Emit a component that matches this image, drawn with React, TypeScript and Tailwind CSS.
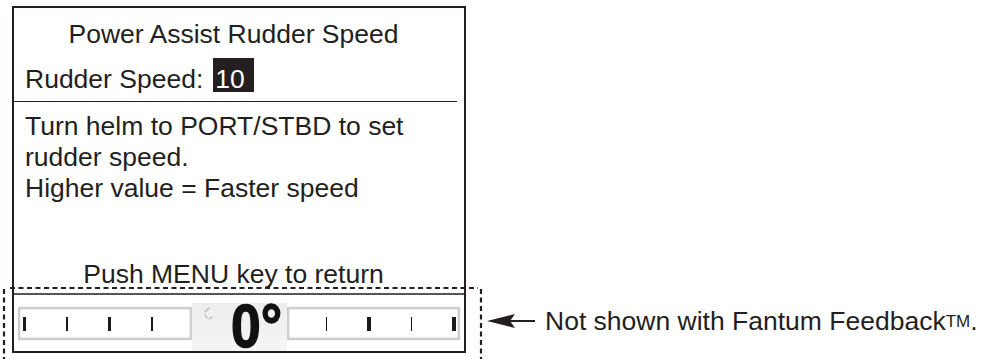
import React from "react";

const INK = "text-[#231f20]";

// one gauge bar with bold/thin tick marks
const Gauge: React.FC<{ side: "left" | "right" }> = ({ side }) => {
  const ticks = side === "left" ? ["b", "t", "b", "t"] : ["t", "b", "t", "b"];
  return (
    <div
      className={`mt-[12px] h-[33px] border-2 border-[#cdcdcd] shadow-[inset_0_0_2px_#bdbdbd,0_0_1px_#d0d0d0] flex items-center gap-[40px] ${
        side === "left" ? "w-[174px] pl-[2.5px] justify-start" : "w-[173px] pr-[2.5px] justify-end"
      }`}
    >
      {ticks.map((t, i) => (
        <div key={i} className={`h-[14px] bg-[#1a1a1a] ${t === "b" ? "w-[3.5px]" : "w-[1.5px]"}`} />
      ))}
    </div>
  );
};

export default function App() {
  return (
    <div
      className={`relative w-[985px] h-[359px] bg-white overflow-hidden flex items-start ${INK}`}
      style={{ fontFamily: '"Liberation Sans", Arial, sans-serif' }}
    >
      {/* display panel */}
      <div className="ml-[12px] mt-[6px] w-[454px] h-[347px] border-2 border-[#231f20] flex flex-col text-[26.5px] leading-[31px]">
        <div className="pt-[10.5px] pr-[11px] text-center">Power Assist Rudder Speed</div>

        <div className="mt-[8.5px] pl-[11px] flex items-baseline">
          <span>Rudder Speed:</span>
          <span className="ml-[10px] inline-block w-[41px] h-[34px] pt-[8px] pl-[2px] leading-[26px] bg-[#231f20] text-white">
            10
          </span>
        </div>

        <div className="mt-[5.5px] mr-[7px] h-[2px] bg-[#231f20]" />

        <div className="mt-[8.5px] pl-[11px]">
          Turn helm to PORT/STBD to set
          <br />
          rudder speed.
          <br />
          Higher value = Faster speed
        </div>

        <div className="mt-[55px] pr-[11px] text-center">Push MENU key to return</div>

        <div className="mt-[3.5px] h-[2px] bg-[#555]" />

        {/* rudder angle strip */}
        <div className="h-[56px] flex items-start pl-[4px]">
          <Gauge side="left" />
          <div className="relative w-[95px] h-full bg-[linear-gradient(to_bottom,#ffffff_0,#ffffff_8px,#ededed_8px,#f5f5f5_100%)]">
            <svg className="absolute left-[11px] top-[12px]" width="11" height="14" viewBox="0 0 11 14">
              <path d="M6 1 L2 5" stroke="#b5b5b5" strokeWidth="1.2" strokeLinecap="round" />
              <path d="M2 8 L4 11" stroke="#b5b5b5" strokeWidth="1.2" strokeLinecap="round" />
              <path d="M6 12 L9 10" stroke="#b5b5b5" strokeWidth="1.2" strokeLinecap="round" />
            </svg>
            <span className="absolute left-[39px] top-0 inline-block origin-left scale-x-[0.86] text-[62px] leading-none font-bold text-[#111] [-webkit-text-stroke:1.5px_#111]">
              0°
            </span>
          </div>
          <Gauge side="right" />
        </div>
      </div>

      {/* annotation */}
      <div className="mt-[305.5px] ml-[21px] flex items-center text-[26.5px] leading-[31px] whitespace-nowrap">
        <svg width="48" height="16" viewBox="0 0 48 16">
          <polygon points="0,8 28,1 23,8 28,15" fill="#231f20" />
          <line x1="22" y1="8" x2="48" y2="8" stroke="#231f20" strokeWidth="2" />
        </svg>
        <span className="ml-[10px]">
          Not shown with Fantum Feedback
          <span className="text-[17px] align-[3px]">TM</span>.
        </span>
      </div>

      {/* dashed outline marking the strip */}
      <svg className="absolute left-0 top-0 pointer-events-none" width="985" height="359">
        <g stroke="#231f20" strokeWidth="2.2" strokeDasharray="5 3.5" fill="none">
          <line x1="10" y1="288" x2="478" y2="288" />
          <line x1="4" y1="289" x2="4" y2="359" />
          <line x1="481" y1="289" x2="481" y2="359" />
        </g>
      </svg>
    </div>
  );
}
